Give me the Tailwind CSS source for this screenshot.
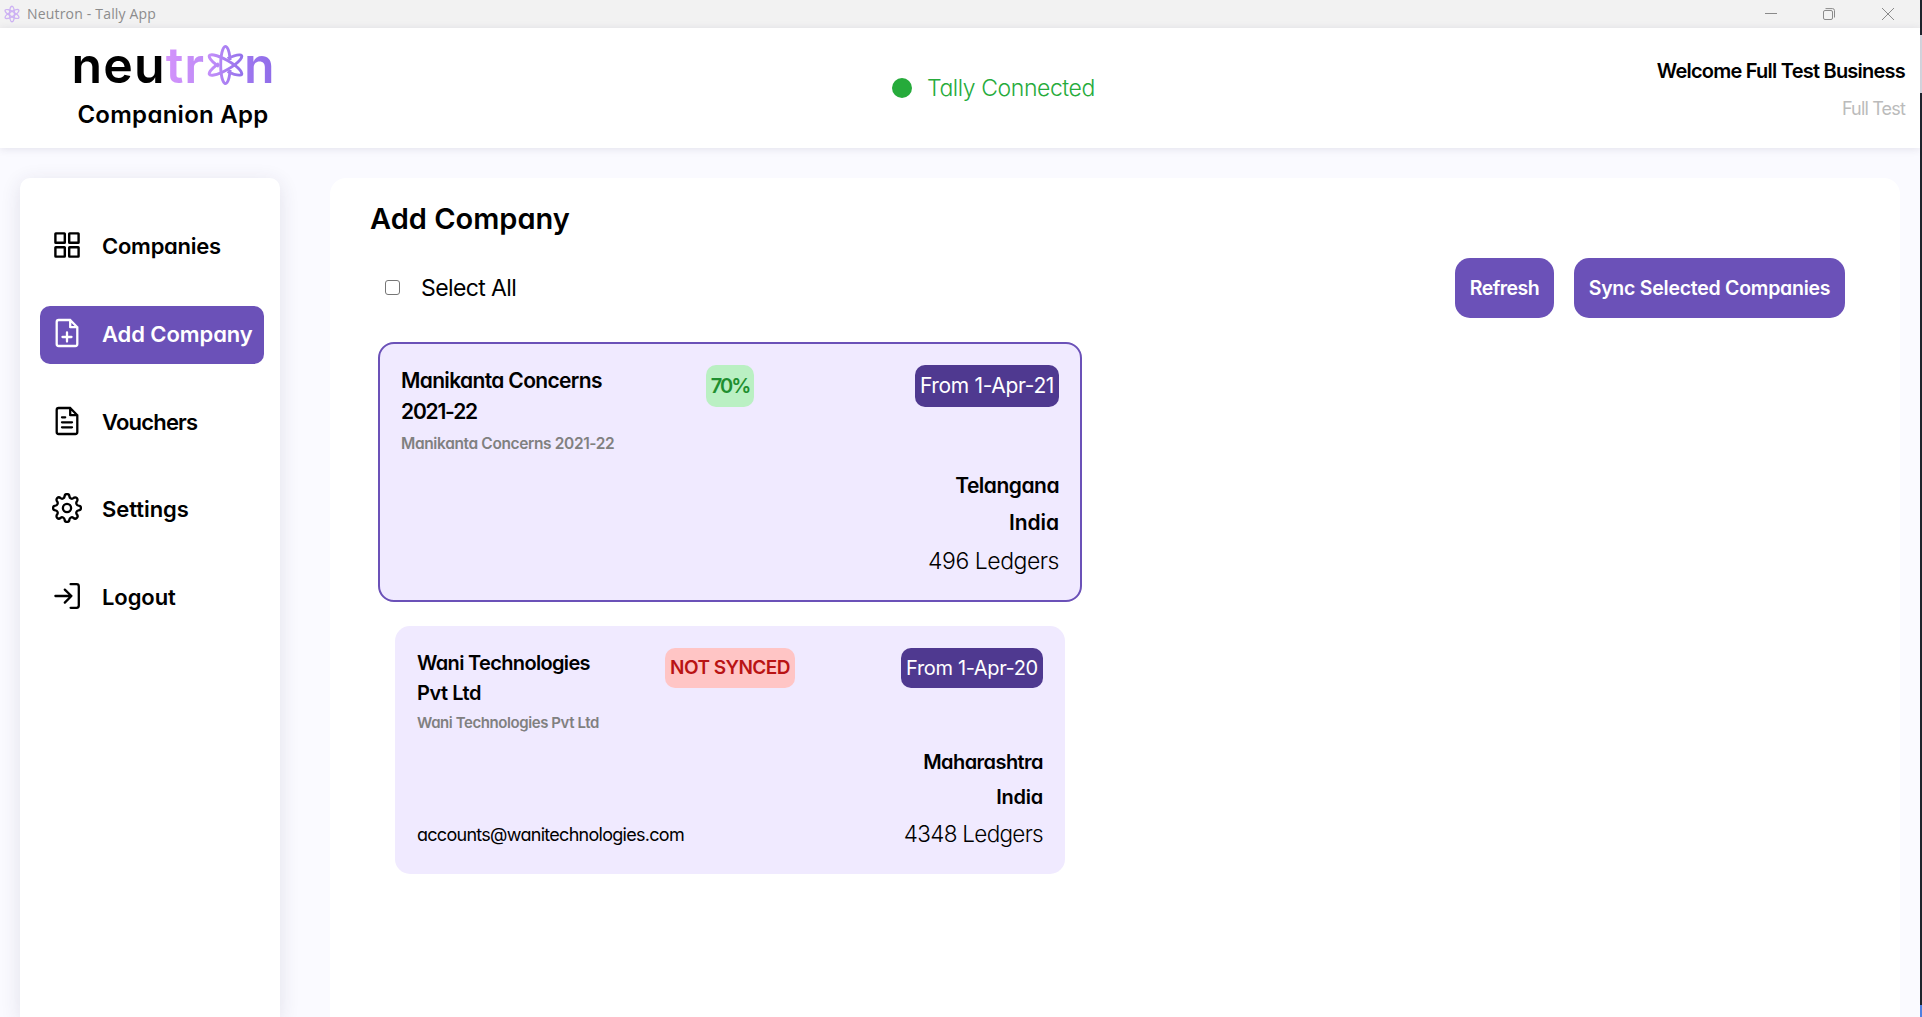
<!DOCTYPE html>
<html lang="en">
<head>
<meta charset="utf-8">
<title>Neutron - Tally App</title>
<script src="https://cdn.jsdelivr.net/npm/@tailwindcss/browser@4"></script>
</head>
<body class="h-[1017px] w-[1922px] overflow-hidden bg-white font-['Inter',sans-serif] text-black [font-feature-settings:'cv11','ss03']">
<div class="flex h-full">
<div class="flex w-[1920px] flex-col">
  <!-- Window title bar -->
  <div class="flex h-7 shrink-0 items-center justify-between bg-[#f2f2f2] pl-1 pr-[26px]">
    <div class="flex items-center gap-[7px]">
      <svg class="shrink-0" width="16" height="18" viewBox="-20 -22 40 44" fill="none" stroke="#cdb2f3" stroke-width="3.4"><ellipse rx="6" ry="19.5"/><ellipse rx="6" ry="19.5" transform="rotate(60)"/><ellipse rx="6" ry="19.5" transform="rotate(120)"/></svg>
      <span class="font-['Open_Sans',sans-serif] text-[14px] leading-5 tracking-[0.18px] text-[#8c8c8c] whitespace-nowrap">Neutron - Tally App</span>
    </div>
    <div class="flex items-center gap-[46.6px] text-[#8a8a8a]">
      <svg class="shrink-0" width="12" height="12" viewBox="0 0 12 12" stroke="currentColor"><path d="M0 5.5H12"/></svg>
      <svg class="shrink-0" width="12" height="12" viewBox="0 0 12 12" fill="none" stroke="currentColor"><rect x=".5" y="2.5" width="9" height="9" rx="1.5"/><path d="M2.5 .6H9.5Q11.5 .6 11.5 2.6V9.5"/></svg>
      <svg class="shrink-0" width="12" height="12" viewBox="0 0 12 12" stroke="currentColor"><path d="M0 0L12 12M12 0L0 12"/></svg>
    </div>
  </div>
  <!-- App header -->
  <header class="relative z-10 grid h-[120px] shrink-0 grid-cols-[346px_1fr_346px] bg-white shadow-[0_1px_8px_rgba(60,50,90,0.12)]">
    <div class="flex flex-col items-center pt-[9px]">
      <div class="flex h-[56px] items-center text-[50px] leading-[56px] font-semibold">
        <span class="tracking-[1.2px]">neu</span>
        <span class="bg-linear-to-r from-[#d393fb] to-[#bf8cf7] bg-clip-text tracking-[0.8px] text-transparent">tr</span>
        <svg class="shrink-0" width="41" height="44" viewBox="-20.5 -22 41 44" fill="none" stroke="url(#atom)" stroke-width="2.9"><defs><linearGradient id="atom" gradientUnits="userSpaceOnUse" x1="-19" y1="0" x2="19" y2="0"><stop stop-color="#c791fb"/><stop offset="1" stop-color="#9070ea"/></linearGradient><linearGradient id="atomB" href="#atom" gradientTransform="rotate(-120)"/><linearGradient id="atomC" href="#atom" gradientTransform="rotate(-240)"/></defs>
          <path d="M4.6 5A4.8 18.6 0 1 1 4.6 -5"/>
          <path d="M4.6 5A4.8 18.6 0 1 1 4.6 -5" transform="rotate(120)" stroke="url(#atomB)"/>
          <path d="M4.6 5A4.8 18.6 0 1 1 4.6 -5" transform="rotate(240)" stroke="url(#atomC)"/>
        </svg>
        <span class="-ml-[2px] bg-linear-to-r from-[#a078f0] to-[#8e6ce8] bg-clip-text text-transparent">n</span>
      </div>
      <span class="mt-[6px] text-[24px] leading-[32px] font-semibold tracking-[0.28px] whitespace-nowrap">Companion App</span>
    </div>
    <div class="flex items-center justify-center gap-[15px] pl-[67px] text-[#26ab3b]">
      <span class="size-5 rounded-full bg-[#26ab3b]"></span>
      <span class="text-[23px] leading-[30px] font-light tracking-[-0.42px] whitespace-nowrap">Tally Connected</span>
    </div>
    <div class="flex flex-col items-end pt-[29px] pr-[15px]">
      <span class="text-[20px] leading-[28px] font-semibold tracking-[-0.77px] whitespace-nowrap">Welcome Full Test Business</span>
      <span class="mt-[10px] text-[18px] leading-[28px] tracking-[-0.83px] text-[#bbbbbb] whitespace-nowrap">Full Test</span>
    </div>
  </header>
  <div class="flex flex-1 gap-[50px] bg-[#fafaff] pt-[30px] pr-5 pl-5">
    <!-- Sidebar -->
    <aside class="w-[260px] rounded-t-[10px] bg-white px-5 pt-[40px] shadow-[0_4px_20px_rgba(50,45,80,0.12)]">
      <nav class="flex w-[224px] flex-col gap-[29.75px] text-[22px] font-semibold whitespace-nowrap">
        <a class="flex h-[58px] items-center gap-[20px] pb-[3px] pl-3"><svg class="-mt-px shrink-0" width="30" height="30" viewBox="0 0 30 30" fill="none" stroke="currentColor" stroke-width="2.4"><rect x="3.4" y="3.4" width="9.4" height="9.4" rx=".4"/><rect x="17.2" y="3.4" width="9.4" height="9.4" rx=".4"/><rect x="3.4" y="17.2" width="9.4" height="9.4" rx=".4"/><rect x="17.2" y="17.2" width="9.4" height="9.4" rx=".4"/></svg><span class="mt-[2px] tracking-[-0.26px]">Companies</span></a>
        <a class="flex h-[58px] items-center gap-[20px] rounded-[10px] bg-[#6b51b8] pb-[3px] pl-3 text-white"><svg class="shrink-0" width="30" height="30" viewBox="0 0 30 30" fill="none" stroke="currentColor" stroke-width="2.3" stroke-linejoin="round" stroke-linecap="round"><path d="M18.2 2H6.7Q4.7 2 4.7 4V26Q4.7 28 6.7 28H23.3Q25.3 28 25.3 26V9.2L18.2 2V9.2H25.3M15 14.5V23.5M10.5 19H19.5"/></svg><span class="mt-[2px] tracking-[-0.08px]">Add Company</span></a>
        <a class="flex h-[58px] items-center gap-[20px] pb-[3px] pl-3"><svg class="shrink-0" width="30" height="30" viewBox="0 0 30 30" fill="none" stroke="currentColor" stroke-width="2.3" stroke-linejoin="round" stroke-linecap="round"><path d="M18.2 2H6.7Q4.7 2 4.7 4V26Q4.7 28 6.7 28H23.3Q25.3 28 25.3 26V9.2L18.2 2V9.2H25.3M10 11.3H13.2M10 16.3H20M10 21.3H20"/></svg><span class="mt-[2px] tracking-[-0.8px]">Vouchers</span></a>
        <a class="flex h-[58px] items-center gap-[20px] pb-[3px] pl-3"><svg class="-mt-px shrink-0" width="30" height="30" viewBox="-15 -15 30 30" fill="none" stroke="currentColor" stroke-width="2.3" stroke-linejoin="round"><circle r="4.1"/><path d="M-2.4 -11.5A2.4 2.4 0 0 1 2.4 -11.5A2.5 2.5 0 0 0 6.43 -9.83A2.4 2.4 0 0 1 9.83 -6.43A2.5 2.5 0 0 0 11.5 -2.4A2.4 2.4 0 0 1 11.5 2.4A2.5 2.5 0 0 0 9.83 6.43A2.4 2.4 0 0 1 6.43 9.83A2.5 2.5 0 0 0 2.4 11.5A2.4 2.4 0 0 1 -2.4 11.5A2.5 2.5 0 0 0 -6.43 9.83A2.4 2.4 0 0 1 -9.83 6.43A2.5 2.5 0 0 0 -11.5 2.4A2.4 2.4 0 0 1 -11.5 -2.4A2.5 2.5 0 0 0 -9.83 -6.43A2.4 2.4 0 0 1 -6.43 -9.83A2.5 2.5 0 0 0 -2.4 -11.5Z"/></svg><span class="mt-[2px] tracking-[-0.05px]">Settings</span></a>
        <a class="flex h-[58px] items-center gap-[20px] pb-[3px] pl-3"><svg class="-mt-px shrink-0" width="30" height="30" viewBox="0 0 30 30" fill="none" stroke="currentColor" stroke-width="2.3" stroke-linejoin="round" stroke-linecap="round"><path d="M18.6 3.2H24.6Q26.8 3.2 26.8 5.4V24.6Q26.8 26.8 24.6 26.8H18.6M3.4 15H19.4M12.8 8.6L19.4 15L12.8 21.6"/></svg><span class="mt-[2px] tracking-[-0.09px]">Logout</span></a>
      </nav>
    </aside>
    <!-- Company list -->
    <main class="flex-1 rounded-t-[16px] bg-white pr-[55px] pl-10">
      <h1 class="pt-[21px] text-[29px] leading-[40px] font-semibold">Add Company</h1>
      <div class="mt-[19px] flex h-[60px] items-center justify-between">
        <label class="flex items-center gap-[21px] pl-[15px]">
          <span class="-mt-px size-[15px] rounded-[3px] border border-[#767676] bg-white"></span>
          <span class="text-[23px] leading-[30px] tracking-[-0.6px] whitespace-nowrap">Select All</span>
        </label>
        <div class="flex gap-5 text-[19.5px] font-semibold whitespace-nowrap text-white">
          <button class="h-[60px] w-[99px] rounded-[15px] bg-[#6b51b8] pt-[2px] tracking-[-0.52px]">Refresh</button>
          <button class="h-[60px] w-[271px] rounded-[15px] bg-[#6b51b8] pt-[2px] tracking-[-0.25px]">Sync Selected Companies</button>
        </div>
      </div>
      <div class="mt-[24px] ml-2 flex w-[704px] flex-col items-center gap-6">
        <section class="flex h-[260px] w-[704px] flex-col justify-between rounded-[16px] border-2 border-[#6b51b8] bg-[#f0eaff] px-[21px] pt-[21px] pb-[18px] whitespace-nowrap">
          <div class="grid grid-cols-[220px_218px_1fr] items-start">
            <div class="flex flex-col">
              <span class="text-[21px] leading-[31px] font-semibold tracking-[-0.65px]">Manikanta Concerns</span>
              <span class="text-[21px] leading-[31px] font-semibold tracking-[-1.2px]">2021-22</span>
              <span class="mt-[3px] text-[15.5px] leading-[28px] font-semibold tracking-[-0.37px] text-[#808080]">Manikanta Concerns 2021-22</span>
            </div>
            <span class="flex h-[42px] w-12 items-center justify-center justify-self-center rounded-[10px] bg-[#baf0c3] text-[20px] font-semibold tracking-[-2px] text-[#1f8f30]">70%</span>
            <span class="flex h-[42px] w-36 items-center justify-center justify-self-end rounded-[10px] bg-[#4f3990] text-[21px] tracking-[-0.33px] text-white">From 1-Apr-21</span>
          </div>
          <div class="flex flex-col items-end text-[21px] leading-[37px] font-semibold">
            <span class="tracking-[-0.5px]">Telangana</span>
            <span class="tracking-[-0.08px]">India</span>
            <span class="text-[23px] leading-[41px] font-light tracking-[-0.47px]">496 Ledgers</span>
          </div>
        </section>
        <section class="flex h-[248px] w-[670px] flex-col justify-between rounded-[15px] bg-[#f0eaff] px-[22px] pt-[22px] pb-[21px] whitespace-nowrap">
          <div class="grid grid-cols-[206px_214px_1fr] items-start">
            <div class="flex flex-col">
              <span class="text-[20px] leading-[30px] font-semibold tracking-[-0.66px]">Wani Technologies</span>
              <span class="text-[20px] leading-[30px] font-semibold tracking-[-0.47px]">Pvt Ltd</span>
              <span class="mt-[2px] text-[15px] leading-[26px] font-semibold tracking-[-0.42px] text-[#808080]">Wani Technologies Pvt Ltd</span>
            </div>
            <span class="flex h-10 w-[130px] items-center justify-center justify-self-center rounded-[10px] bg-[#ffc5c5] pt-px text-[19px] font-semibold tracking-[-0.55px] text-[#b91414]">NOT SYNCED</span>
            <span class="flex h-10 w-[142px] items-center justify-center justify-self-end rounded-[10px] bg-[#4f3990] text-[20px] tracking-[-0.35px] text-white">From 1-Apr-20</span>
          </div>
          <div class="flex items-end justify-between">
            <span class="text-[18px] leading-[37px] tracking-[-0.72px]">accounts@wanitechnologies.com</span>
            <div class="flex flex-col items-end text-[20px] leading-[35px] font-semibold">
              <span class="tracking-[-0.55px]">Maharashtra</span>
              <span class="tracking-[-0.25px]">India</span>
              <span class="text-[22.5px] leading-[38px] font-light tracking-[-0.7px]">4348 Ledgers</span>
            </div>
          </div>
        </section>
      </div>
    </main>
  </div>
</div>
<!-- Desktop edge beside the window -->
<div class="w-0.5 bg-[#1e242c]">
  <div class="mt-[35px] h-[58px] bg-[#d9dbe2]"></div>
  <div class="mt-[912px] h-3 bg-[#4f7fe0]"></div>
</div>
</div>
</body>
</html>
